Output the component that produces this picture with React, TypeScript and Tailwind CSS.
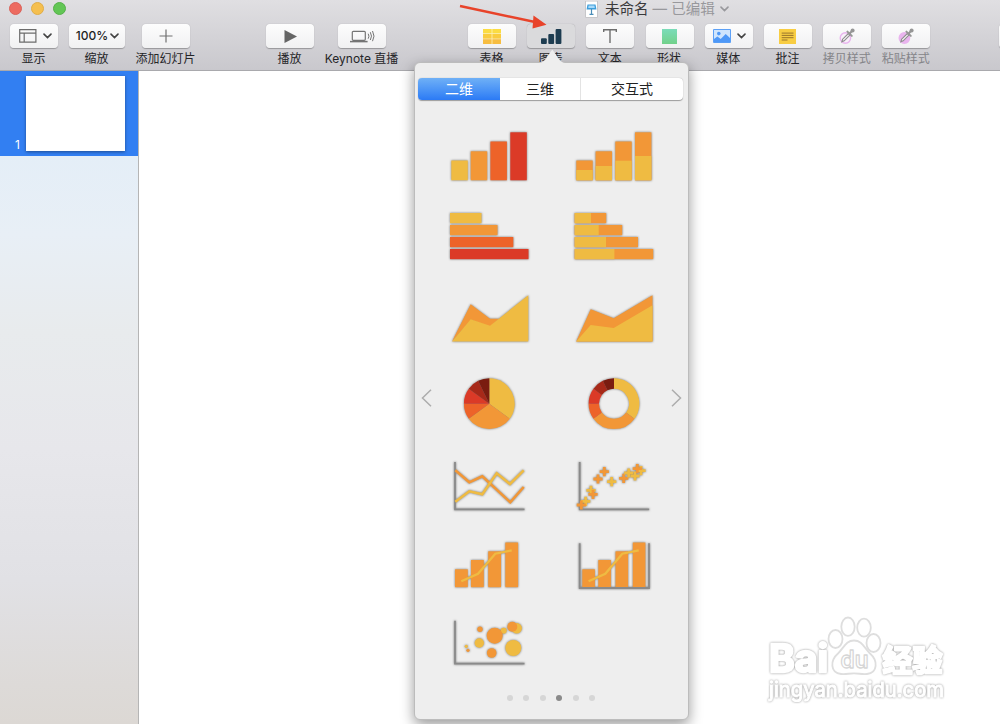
import type { ReactNode } from 'react';
import clsx from 'clsx';

const YELLOW = '#efbb42';
const ORANGE = '#f29737';
const VERMILION = '#ed6329';
const RED = '#db3a27';
const AXIS = '#8a8a8a';
const PIE_COLORS = [YELLOW, ORANGE, VERMILION, RED, '#a72919', '#7a1c10'];
const PIE_STOPS = [0, 126, 234, 270, 306, 334, 360];

interface ToolProps {
  label: string;
  className?: string;
  active?: boolean;
  muted?: boolean;
  children?: ReactNode;
}

function Tool({ label, className = 'w-12', active, muted, children }: ToolProps) {
  return (
    <div className={clsx('flex shrink-0 flex-col items-center', className)}>
      <button
        className={clsx(
          'flex h-6 w-full items-center justify-center gap-1.5 rounded-[4px] shadow-[0_0.5px_1px_rgba(0,0,0,0.28)]',
          active ? 'bg-[#dadadc]' : 'bg-gradient-to-b from-[#fdfdfd] to-[#f1f1f2]',
        )}
      >
        {children}
      </button>
      <span className={clsx('mt-[3px] mr-px text-xs leading-4 whitespace-nowrap', muted ? 'text-[#858589]' : 'text-[#252528]')}>
        {label}
      </span>
    </div>
  );
}

function Chevron({ color = '#444' }: { color?: string }) {
  return (
    <svg width="9" height="6" viewBox="0 0 9 6" fill="none" stroke={color} strokeWidth="1.6" strokeLinecap="round">
      <path d="M1 1.1 4.500 4.600 8 1.1" />
    </svg>
  );
}

function Dropper({ filled }: { filled?: boolean }) {
  return (
    <svg width="18" height="18" viewBox="0 0 18 18" className="-mt-px">
      <circle cx="7.4" cy="11" r="5.2" fill={filled ? '#e9b4ee' : '#f8effa'} stroke="#e9b4ee" strokeWidth="1.4" />
      <path d="m3.800 14.800.8-2.600 5.700-5.700 1.600 1.600-5.700 5.700z" fill="#f4f0f5" stroke="#8c8c8c" strokeWidth="1.1" />
      <path d="m9.400 4.600 4.400 4.300M11.400 6.700l3.300-3.500" stroke="#969696" strokeWidth="2" strokeLinecap="round" />
      <circle cx="14.600" cy="3.400" r="2" fill="#969696" />
    </svg>
  );
}

function Toolbar() {
  return (
    <header className="h-[71px] shrink-0 overflow-hidden border-b border-[#a9a9ad] bg-gradient-to-b from-[#e0dfe2] to-[#c9c8cd]">
      <div className="flex h-6 items-start">
        <div className="flex gap-[9px] pt-[2px] pl-[9px]">
          <span className="size-[13px] rounded-full border border-[#da625a] bg-[#ed6b60]" />
          <span className="size-[13px] rounded-full border border-[#e0ad47] bg-[#f5bf4f]" />
          <span className="size-[13px] rounded-full border border-[#55b049] bg-[#62c655]" />
        </div>
        <div className="ml-[519px] flex items-center">
          <svg width="13" height="17" viewBox="0 0 13 17">
            <path d="M.5 0h12v16.5H.5z" fill="#fff" stroke="#c7c7ca" />
            <path d="M2.500 3.500h8l1 5h-10z" fill="#3d9edb" />
            <path d="M3.600 4.600h5.800l.4 2.500H3.200z" fill="#a8dafa" />
            <path d="M6.5 8v5M4.5 13.3h4" stroke="#498db8" strokeWidth="1.2" />
          </svg>
          <span className="ml-[7px] text-[14.5px] leading-[18px] whitespace-nowrap text-[#39393b]">
            未命名<span className="text-[#98989c]"> — 已编辑</span>
          </span>
          <span className="ml-[5px]"><Chevron color="#98989c" /></span>
        </div>
      </div>

      <div className="flex">
        <Tool label="显示" className="ml-2.5 w-12">
          <svg width="18" height="14" viewBox="0 0 18 14" fill="none" stroke="#6c6c6c" strokeWidth="1.2" className="ml-[3px]">
            <path d="M.7.7h16.2v12.5H.7zM.7 4.2h16.2M5.2 4.2v9" />
          </svg>
          <Chevron />
        </Tool>
        <Tool label="缩放" className="ml-[11px] w-14">
          <span className="-mr-[4px] ml-px text-xs font-medium text-[#1f1f1f]">100%</span>
          <Chevron />
        </Tool>
        <Tool label="添加幻灯片" className="ml-[17px] w-12">
          <svg width="14" height="14" viewBox="0 0 14 14" stroke="#707070" strokeWidth="1.2">
            <path d="M7 .5v13M.5 7h13" />
          </svg>
        </Tool>
        <Tool label="播放" className="ml-[76px] w-12">
          <svg width="13" height="13" viewBox="0 0 13 13"><path d="M.5 0 13 6.5.5 13z" fill="#656565" /></svg>
        </Tool>
        <Tool label="Keynote 直播" className="ml-6 w-12">
          <svg width="25" height="13" viewBox="0 0 25 13" fill="none" stroke="#747474" strokeWidth="1.2">
            <rect x="2.3" y="1.3" width="13" height="9" rx="1" />
            <path d="M0 11.6h17.6" strokeWidth="1.5" />
            <path d="M18.200 3.700q1.500 2.600 0 5M20.300 2.200q2.400 4 0 7.800M22.500 1q3 5.200 0 10.200" strokeWidth="1" />
          </svg>
        </Tool>

        <div className="ml-[82px] flex gap-[11.2px]">
          <Tool label="表格">
            <svg width="18" height="15" viewBox="0 0 18 15">
              <path d="M0 0h18v4.500H0z" fill="#fbdc43" />
              <path d="M0 5h18v4.700H0z" fill="#f9cc3f" />
              <path d="M0 10.200h18V15H0z" fill="#f7bd40" />
              <path d="M9 0v15" stroke="#fff3b6" strokeWidth=".8" />
            </svg>
          </Tool>
          <Tool label="图表" active>
            <svg width="21" height="15" viewBox="0 0 21 15" fill="#1d3c50">
              <rect x="0" y="9.3" width="5.8" height="5.7" rx="1" />
              <rect x="7.3" y="5" width="5.8" height="10" rx="1" />
              <rect x="14.6" y="0" width="5.8" height="15" rx="1" />
            </svg>
          </Tool>
          <Tool label="文本">
            <svg width="14" height="14" viewBox="0 0 14 14" fill="none" stroke="#6e6e6e" strokeWidth="1.4">
              <path d="M.7 3V.8h12.600V3M7 .7V14" />
            </svg>
          </Tool>
          <Tool label="形状">
            <span className="size-[15px] bg-gradient-to-b from-[#7bdcb9] to-[#72d18a]" />
          </Tool>
          <Tool label="媒体">
            <svg width="18" height="14" viewBox="0 0 18 14" className="ml-[2px]">
              <path d="M.5.5h17v13H.5z" fill="#cfe5fd" stroke="#5ca0f6" />
              <circle cx="5.8" cy="4.6" r="1.8" fill="#4e98f7" />
              <path d="m1 10 3.4-2.4L7.7 10l5-5 4.3 4v4.3H1z" fill="#4e98f7" />
            </svg>
            <Chevron />
          </Tool>
          <Tool label="批注">
            <svg width="17" height="15" viewBox="0 0 17 15">
              <path d="M0 0h17v15H0z" fill="#f8cd43" />
              <path d="M2.7 4.1h11.8M2.7 6.4h11.8M2.7 8.7h11.8M2.7 11h5.8" stroke="#9a752b" />
            </svg>
          </Tool>
          <Tool label="拷贝样式" muted><Dropper /></Tool>
          <Tool label="粘贴样式" muted><Dropper filled /></Tool>
        </div>
        <Tool label="" className="ml-[69px] w-12" />
      </div>
    </header>
  );
}

function ChartCell({ children }: { children: ReactNode }) {
  return (
    <svg width="124" height="81" viewBox="0 0 124 81" className="drop-shadow-[0_0.7px_1px_rgba(0,0,0,0.5)]">
      {children}
    </svg>
  );
}

function Columns({ xs, tops, base, width, colors }: { xs: number[]; tops: number[]; base: number; width: number; colors: string[] }) {
  return <>{xs.map((x, i) => <rect key={x} x={x} y={tops[i]} width={width} height={base - tops[i]} fill={colors[i % colors.length]} />)}</>;
}

function Pie({ cx, cy, r }: { cx: number; cy: number; r: number }) {
  const point = (deg: number) => {
    const a = (deg * Math.PI) / 180;
    return `${cx + r * Math.sin(a)} ${cy - r * Math.cos(a)}`;
  };
  return (
    <>
      {PIE_COLORS.map((c, i) => (
        <path key={c} d={`M${cx} ${cy}L${point(PIE_STOPS[i])}A${r} ${r} 0 0 1 ${point(PIE_STOPS[i + 1])}z`} fill={c} />
      ))}
    </>
  );
}

function Donut() {
  // ring of radius 20.2, stroked segment by segment
  const ring = (deg: number) => {
    const a = (deg * Math.PI) / 180;
    return `${62 + 20.2 * Math.sin(a)} ${44.7 - 20.2 * Math.cos(a)}`;
  };
  return (
    <>
      {PIE_COLORS.map((c, i) => (
        <path key={c} d={`M${ring(PIE_STOPS[i])}A20.2 20.2 0 0 1 ${ring(PIE_STOPS[i + 1])}`} fill="none" stroke={c} strokeWidth="10.4" />
      ))}
    </>
  );
}

const barWidths = [31.5, 47.5, 63.3, 78.5];
const barTops = [16, 28, 40, 52];
const barSplits = [16.3, 24, 31.3, 39.7];

const crosses: [number, number, string][] = [
  [33.7, 61.3, YELLOW], [29.3, 65, ORANGE], [39, 50.3, YELLOW], [41, 54.3, ORANGE],
  [46, 39, ORANGE], [52.3, 31.7, ORANGE], [59.7, 41.7, YELLOW], [71.7, 38.3, ORANGE],
  [76.7, 33, YELLOW], [83, 36, YELLOW], [89, 30.7, YELLOW], [85.3, 28.7, ORANGE],
];

const bubbles: [number, number, number, string][] = [
  [52, 27.3, 2.7, ORANGE], [75.7, 28.7, 3, YELLOW], [66.7, 33.7, 8, ORANGE], [88.7, 26.3, 5.2, YELLOW],
  [84.3, 24.7, 5, ORANGE], [51.3, 41, 4.7, YELLOW], [85.3, 46, 8, YELLOW], [63.7, 51, 4.8, ORANGE],
  [38.3, 44.3, 1.6, YELLOW], [40, 48.3, 1.6, ORANGE],
];

function ChartGrid() {
  return (
    <div className="grid grid-cols-[124px_124px]">
      <ChartCell>
        <Columns xs={[23.3, 42.7, 62.4, 82.3]} tops={[44.5, 35.3, 25.5, 16.3]} base={64.3} width={16.5} colors={[YELLOW, ORANGE, VERMILION, RED]} />
      </ChartCell>
      <ChartCell>
        <Columns xs={[24.3, 43.6, 63.3, 83]} tops={[44.5, 35.3, 25.5, 16.3]} base={64.3} width={16.4} colors={[ORANGE]} />
        <Columns xs={[24.3, 43.6, 63.3, 83]} tops={[54, 50, 44.7, 40]} base={64.3} width={16.4} colors={[YELLOW]} />
      </ChartCell>

      <ChartCell>
        {barWidths.map((w, i) => <rect key={w} x="22" y={barTops[i]} width={w} height="10.2" fill={PIE_COLORS[i]} />)}
      </ChartCell>
      <ChartCell>
        {barWidths.map((w, i) => (
          <g key={w}>
            <rect x="22.7" y={barTops[i]} width={w} height="10.2" fill={ORANGE} />
            <rect x="22.7" y={barTops[i]} width={barSplits[i]} height="10.2" fill={YELLOW} />
          </g>
        ))}
      </ChartCell>

      <ChartCell>
        <path d="M24 63.5 42.7 26.3 62 40.7h9l-9 8-19-7z" fill={ORANGE} />
        <path d="M24 63.5 42.7 41.3 62 47.7l38.3-30.4v46.2z" fill={YELLOW} />
      </ChartCell>
      <ChartCell>
        <path d="M24.2 63.5 38.7 31.3l23 9 38.8-23v46.2z" fill={ORANGE} />
        <path d="M24.2 63.5 38.7 47l23 3 38.8-22.7v36.2z" fill={YELLOW} />
      </ChartCell>

      <ChartCell><Pie cx={61.3} cy={44.7} r={25.4} /></ChartCell>
      <ChartCell><Donut /></ChartCell>

      <ChartCell>
        <path d="M27 22v47.4h69.5" fill="none" stroke={AXIS} strokeWidth="1.8" />
        <path d="M27.3 30.3 41.3 42.3l13-6 28 26L95.7 47" fill="none" stroke={ORANGE} strokeWidth="2.5" />
        <path d="m27.3 61.7 14-10.4 13 3 14.4-21L82 44l13.7-13.7" fill="none" stroke={YELLOW} strokeWidth="2.5" />
      </ChartCell>
      <ChartCell>
        <path d="M27.7 22v47.4h69.5" fill="none" stroke={AXIS} strokeWidth="1.8" />
        {crosses.map(([x, y, c]) => (
          <path key={`${x}-${y}`} d={`M${x - 4.6} ${y}h9.2M${x} ${y - 4.6}v9.2`} stroke={c} strokeWidth="2.8" />
        ))}
      </ChartCell>

      <ChartCell>
        <Columns xs={[27, 43, 60.2, 77.3]} tops={[48.3, 39, 30.3, 21.5]} base={66.2} width={12.8} colors={[ORANGE]} />
        <path d="m33.3 60.2 16.7-7.5 17.3-20 16.400-3.400" fill="none" stroke={YELLOW} strokeWidth="2.3" />
      </ChartCell>
      <ChartCell>
        <Columns xs={[30.3, 46.3, 63.5, 80.8]} tops={[48.3, 39, 30.3, 21.5]} base={66.2} width={12.6} colors={[ORANGE]} />
        <path d="M27.7 22.3V67H97V22.3" fill="none" stroke={AXIS} strokeWidth="1.8" />
        <path d="m36.6 60.2 16.7-7.5 17-20 16.400-3.400" fill="none" stroke={YELLOW} strokeWidth="2.3" />
      </ChartCell>

      <ChartCell>
        <path d="M27 18.7v43h69.5" fill="none" stroke={AXIS} strokeWidth="1.8" />
        {bubbles.map(([x, y, r, c]) => <circle key={`${x}-${y}`} cx={x} cy={y} r={r} fill={c} />)}
      </ChartCell>
    </div>
  );
}

function PageArrow({ flip }: { flip?: boolean }) {
  return (
    <svg width="11" height="18" viewBox="0 0 11 18" fill="none" stroke="#adadad" strokeWidth="1.5" className={clsx('mb-1', flip && 'rotate-180')}>
      <path d="M10 .8 1.5 9l8.5 8.2" />
    </svg>
  );
}

function ChartPopover() {
  return (
    <div className="absolute top-[62px] left-[414px] h-[658px] w-[275px] rounded-[6px] border border-[#bcbcbc] bg-[#eeeeee] shadow-[0_5px_14px_rgba(0,0,0,0.4)]">
      <svg width="30" height="15" viewBox="0 0 30 15" className="absolute -top-[14px] left-[122px]">
        <path d="M0 14.3c6 0 8-3 12-9 2-3 3-4.5 3.3-4.5s1.3 1.5 3.3 4.5c4 6 6 9 11.4 9V15H0z" fill="#eeeeee" />
      </svg>

      <div className="mr-[5px] ml-[3px] mt-[15px] flex h-[22px] overflow-hidden rounded-[4px] bg-white text-[14px] leading-[22px] text-[#222] shadow-[0_0.5px_1px_rgba(0,0,0,0.35)]">
        <button className="w-[82px] bg-gradient-to-b from-[#6fb0f6] to-[#2b7af5] text-white">二维</button>
        <button className="w-20">三维</button>
        <button className="flex-1 border-l border-[#e3e3e3]">交互式</button>
      </div>

      <div className="mt-4 flex items-center justify-between pr-[6px] pl-[6px]">
        <PageArrow />
        <div className="-mx-[5px]"><ChartGrid /></div>
        <PageArrow flip />
      </div>

      <div className="mt-[12px] flex justify-center gap-[10.4px] pr-px">
        {[0, 1, 2, 3, 4, 5].map(i => (
          <span key={i} className={clsx('size-[6px] rounded-full', i === 3 ? 'bg-[#8a8a8a]' : 'bg-[#d6d6d6]')} />
        ))}
      </div>
    </div>
  );
}

const GLOW = 'drop-shadow-[0_0_0.8px_rgba(0,0,0,0.42)]';

function Watermark() {
  return (
    <svg width="190" height="92" viewBox="760 612 190 92" className="absolute top-[612px] left-[760px]" fill="#fff" stroke="#fff" strokeWidth="2.4">
      <g strokeLinejoin="round" fontWeight="700">
        <text className={GLOW} x="769" y="672" fontSize="38" textLength="59" lengthAdjust="spacingAndGlyphs">Bai</text>
        <g stroke="#dedede" strokeWidth="1.8">
          <ellipse cx="835.5" cy="639" rx="7" ry="9" />
          <ellipse cx="848" cy="626.7" rx="6.7" ry="9.2" />
          <ellipse cx="864" cy="627.7" rx="6.8" ry="9" />
          <ellipse cx="873.5" cy="643" rx="7" ry="9" />
          <path d="M854 640.5c8 0 10 7 16 13 8 7 8 19-3 20.5-5 .6-8-.7-13-.7s-8 1.3-13 .7c-11-1.500-11-13.500-3-20.500 6-6 8-13 16-13z" />
        </g>
        <text x="840.500" y="668" fontSize="24" textLength="28" lengthAdjust="spacingAndGlyphs" fontWeight="600" stroke="#d6d6d6" strokeWidth="1.3">du</text>
        <text className={GLOW} x="882.500" y="670.500" fontSize="30" textLength="60">经验</text>
      </g>
      <text className={GLOW} x="769" y="696.500" fontSize="20.500" strokeWidth="1" textLength="175" lengthAdjust="spacingAndGlyphs">jingyan.baidu.com</text>
    </svg>
  );
}

export default function App() {
  return (
    <div className="relative flex h-[724px] w-[1000px] flex-col overflow-hidden bg-white font-[Inter,'Noto_Sans_CJK_SC',sans-serif]">
      <Toolbar />
      <div className="flex flex-1">
        <aside className="w-[139px] border-r border-[#b5b5b5] bg-[linear-gradient(to_bottom,#e4eef7_13%,#e8eff6_25%,#e8ebed_40%,#e7e7eb_58%,#e1e1e5_78%,#dddad8_94%,#dcd8d4_100%)]">
          <div className="flex h-[85px] items-end bg-[#327ff2] pb-[5px] pl-[15px]">
            <span className="w-[11px] text-xs leading-3 text-white">1</span>
            <span className="h-[75px] w-[99px] bg-white shadow-[0_1px_3px_rgba(0,0,0,0.4)]" />
          </div>
        </aside>
        <main className="flex-1 bg-white" />
      </div>
      <Watermark />
      <ChartPopover />
      <svg width="92" height="28" viewBox="0 0 92 28" className="absolute top-[2px] left-[457px]">
        <path d="M3 4 78 20" stroke="#e8432a" strokeWidth="2.4" />
        <path d="m76.500 13.500 13 9.200-14 3.800z" fill="#e8432a" />
      </svg>
    </div>
  );
}
